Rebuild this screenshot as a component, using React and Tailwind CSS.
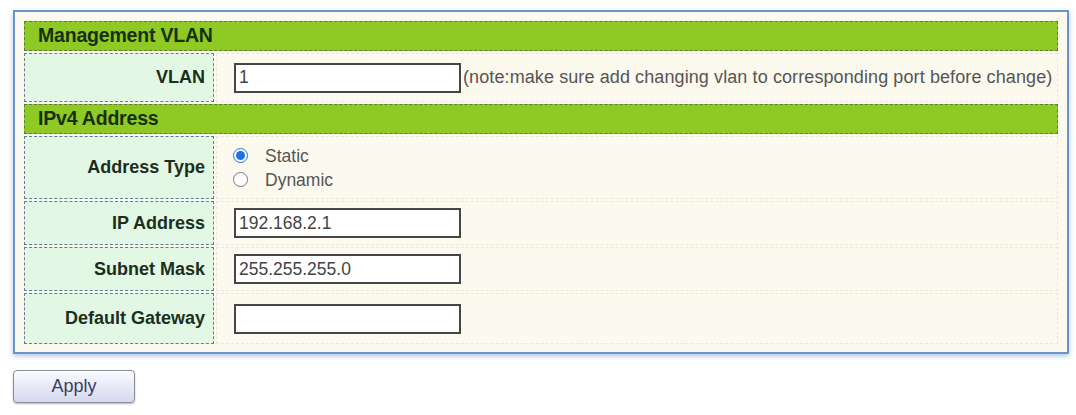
import React, { useState } from "react";

const font = { fontFamily: '"Liberation Sans", Arial, sans-serif' };

const Header = ({ children }) => (
  <div className="h-[30px] flex items-center pl-[13px] bg-[#8fc924] border border-dashed border-[#5a7a4a] text-[19.5px] font-bold text-[#17300f] tracking-[-0.2px]">
    {children}
  </div>
);

const Row = ({ label, height, children }) => (
  <div className="flex gap-[2px]" style={{ height }}>
    <div className="w-[190px] shrink-0 flex items-center justify-end pr-[8px] bg-[#e2f8e4] border border-dashed border-[#5f7f94] text-[18px] font-bold text-[#1c2f1c] whitespace-nowrap">
      {label}
    </div>
    <div className="flex-1 flex items-center pl-[17px] border border-dashed border-[#ece8d8]">
      {children}
    </div>
  </div>
);

const TextBox = ({ value, onChange }) => (
  <input
    type="text"
    value={value}
    onChange={(e) => onChange(e.target.value)}
    className="w-[227px] h-[30px] px-[3px] bg-white border-2 border-[#464646] text-[17.5px] text-[#444] outline-none"
    style={font}
  />
);

const App = () => {
  const [vlan, setVlan] = useState("1");
  const [type, setType] = useState("static");
  const [ip, setIp] = useState("192.168.2.1");
  const [mask, setMask] = useState("255.255.255.0");
  const [gateway, setGateway] = useState("");

  return (
    <div className="w-[1076px] h-[415px] bg-white pt-[10px] pl-[13px]" style={font}>
      <div className="w-[1056px] border-2 border-[#6b95c9] bg-[#fcf9ee] shadow-[0_2px_5px_rgba(80,120,180,0.45)] pt-[9px] pb-[8px] px-[9px] flex flex-col gap-[2px]">
        <Header>Management VLAN</Header>
        <Row label="VLAN" height={49}>
          <TextBox value={vlan} onChange={setVlan} />
          <span className="ml-[2px] text-[18px] text-[#555] whitespace-nowrap tracking-[0.1px]">
            (note:make sure add changing vlan to corresponding port before change)
          </span>
        </Row>
        <Header>IPv4 Address</Header>
        <Row label="Address Type" height={63}>
          <div className="flex flex-col gap-[4px] -ml-[1px]">
            {["static", "dynamic"].map((t) => (
              <label key={t} className="flex items-center gap-[17px] text-[17.5px] text-[#555] leading-[20px] cursor-pointer">
                <input
                  type="radio"
                  name="addrType"
                  checked={type === t}
                  onChange={() => setType(t)}
                  className="w-[15px] h-[15px] m-0 accent-[#1a73e8]"
                />
                {t === "static" ? "Static" : "Dynamic"}
              </label>
            ))}
          </div>
        </Row>
        <Row label="IP Address" height={44}>
          <TextBox value={ip} onChange={setIp} />
        </Row>
        <Row label="Subnet Mask" height={44}>
          <TextBox value={mask} onChange={setMask} />
        </Row>
        <Row label="Default Gateway" height={51}>
          <TextBox value={gateway} onChange={setGateway} />
        </Row>
      </div>
      <button
        type="button"
        className="mt-[16px] w-[122px] h-[33px] rounded-[4px] border border-[#8a8f9a] bg-gradient-to-b from-[#fafaff] to-[#d6d8f0] shadow-[0_1px_2px_rgba(0,0,0,0.3)] text-[18px] text-[#3a3f5a]"
        style={font}
      >
        Apply
      </button>
    </div>
  );
};

export default App;
